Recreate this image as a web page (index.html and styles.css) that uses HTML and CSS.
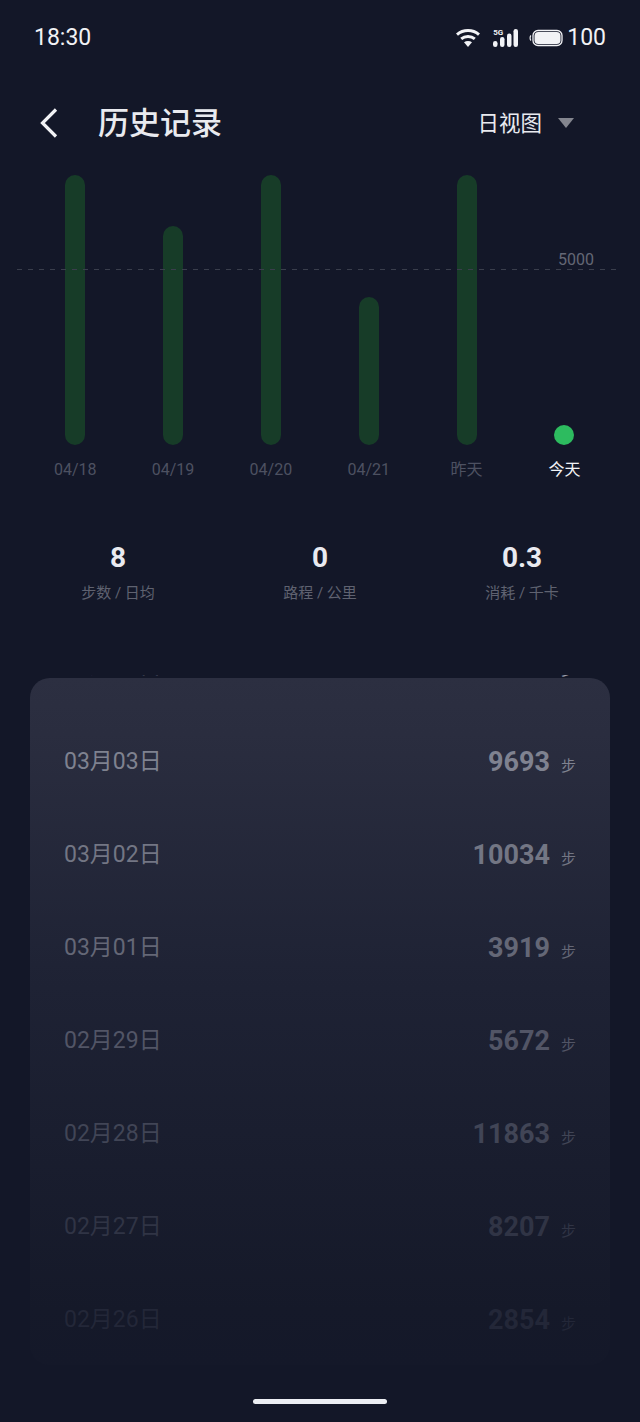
FILE: index.html

```html
<!DOCTYPE html>
<html lang="zh">
<head>
  <meta charset="UTF-8" />
  <meta name="viewport" content="width=device-width, initial-scale=1.0"/>
  <title>历史记录</title>
  <link rel="stylesheet" href="styles.css">
</head>
<body>

<div class="status-bar">
  <span class="time">18:30</span>
  <div class="status-icons">
    <svg class="wifi" width="24" height="18" viewBox="0 0 24 18">
      <path d="M1 5.6C7.2 .2 16.8 .2 23 5.6" fill="none" stroke="#f2f3f6" stroke-width="3"/>
      <path d="M5.2 9.8C9 6.6 15 6.6 18.8 9.8" fill="none" stroke="#f2f3f6" stroke-width="3"/>
      <path d="M8 13.2C10.4 11.6 13.600 11.6 16 13.2L12 18Z" fill="#f2f3f6"/>
    </svg>
    <div class="signal">
      <span class="signal-tag">5G</span>
      <svg width="25" height="18" viewBox="0 0 25 18">
        <rect x="0" y="12" width="4.500" height="6" rx="2.200" fill="#f2f3f6"/>
        <rect x="7" y="8" width="4.500" height="10" rx="2.200" fill="#f2f3f6"/>
        <rect x="14" y="4.500" width="4.500" height="13.500" rx="2.200" fill="#f2f3f6"/>
        <rect x="20.500" y="0" width="4.500" height="18" rx="2.200" fill="#f2f3f6"/>
      </svg>
    </div>
    <svg class="battery" width="34" height="18" viewBox="0 0 34 18">
      <path d="M2 6.500C.8 7.500 .8 10.500 2 11.500" fill="none" stroke="#f2f3f6" stroke-width="1.200"/>
      <rect x="4" y="1.500" width="29" height="15" rx="5" fill="none" stroke="#f2f3f6" stroke-width="1.300"/>
      <rect x="5.500" y="3" width="26" height="12" rx="3.800" fill="#f2f3f6"/>
    </svg>
    <span class="battery-num">100</span>
  </div>
</div>

<div class="top-nav">
  <svg class="back" width="18" height="30" viewBox="0 0 18 30">
    <path d="M16 1.500L2.500 15L16 28.500" fill="none" stroke="#f1f2f5" stroke-width="3.200"/>
  </svg>
  <h1>历史记录</h1>
  <div class="view-select">
    <span>日视图</span>
    <i class="caret"></i>
  </div>
</div>

<div class="chart">
  <div class="goal-line"></div>
  <span class="goal-num">5000</span>
  <div class="plot">
    <div class="bar tall"></div>
    <div class="bar b2"></div>
    <div class="bar tall"></div>
    <div class="bar b4"></div>
    <div class="bar tall"></div>
    <div class="dot"></div>
  </div>
  <div class="days">
    <span>04/18</span>
    <span>04/19</span>
    <span>04/20</span>
    <span>04/21</span>
    <span>昨天</span>
    <span class="today">今天</span>
  </div>
</div>

<div class="stats">
  <div class="stat"><b>8</b><span>步数 / 日均</span></div>
  <div class="stat"><b>0</b><span>路程 / 公里</span></div>
  <div class="stat"><b>0.3</b><span>消耗 / 千卡</span></div>
</div>

<div class="history">
  <div class="row peek"><span class="date">03月04日</span><span class="steps"><b>10086</b><small>步</small></span></div>
  <div class="row r1"><span class="date">03月03日</span><span class="steps"><b>9693</b><small>步</small></span></div>
  <div class="row r2"><span class="date">03月02日</span><span class="steps"><b>10034</b><small>步</small></span></div>
  <div class="row r3"><span class="date">03月01日</span><span class="steps"><b>3919</b><small>步</small></span></div>
  <div class="row r4"><span class="date">02月29日</span><span class="steps"><b>5672</b><small>步</small></span></div>
  <div class="row r5"><span class="date">02月28日</span><span class="steps"><b>11863</b><small>步</small></span></div>
  <div class="row r6"><span class="date">02月27日</span><span class="steps"><b>8207</b><small>步</small></span></div>
  <div class="row r7"><span class="date">02月26日</span><span class="steps"><b>2854</b><small>步</small></span></div>
</div>

<div class="home-bar"></div>

</body>
</html>
```

FILE: styles.css

```css
* {
  box-sizing: border-box;
}

body {
  margin: 0;
  width: 640px;
  height: 1422px;
  overflow: hidden;
  background-color: #131728;
  color: #f1f2f5;
  font-family: Roboto, "Noto Sans CJK SC", sans-serif;
}

.status-bar {
  height: 74px;
  padding: 1px 34px 0;
  display: flex;
  align-items: center;
  justify-content: space-between;
}

.time {
  font-size: 23px;
}

.status-icons {
  display: flex;
  align-items: center;
}

.wifi {
  margin-right: 13px;
}

.signal {
  position: relative;
  margin-right: 11px;
  height: 18px;
}

.signal svg {
  display: block;
}

.signal-tag {
  position: absolute;
  left: 0;
  top: -1px;
  font-size: 8px;
  line-height: 9px;
  font-weight: 700;
}

.battery {
  margin-right: 4px;
}

.battery-num {
  font-size: 23px;
}

.top-nav {
  height: 98px;
  padding: 0 66px 0 40px;
  display: flex;
  align-items: center;
}

.back {
  margin-right: 40px;
}

.top-nav h1 {
  margin: 0 0 5px;
  font-size: 31px;
  font-weight: 500;
  color: #e9eaef;
  flex: 1;
}

.view-select {
  display: flex;
  align-items: center;
  font-size: 21.500px;
  color: #e9eaef;
}

.view-select span {
  padding-bottom: 4px;
}

.caret {
  margin-left: 16px;
  border-left: 8px solid transparent;
  border-right: 8px solid transparent;
  border-top: 10px solid #84868f;
}

.chart {
  position: relative;
  padding: 3px 26.700px 0 26.300px;
}

.goal-line {
  position: absolute;
  left: 17px;
  right: 20px;
  top: 97px;
  height: 1px;
  background: repeating-linear-gradient(90deg, #3a3e4c 0, #3a3e4c 5px, transparent 5px, transparent 11px);
}

.goal-num {
  position: absolute;
  left: 558px;
  top: 79px;
  font-size: 16px;
  line-height: 18px;
  color: #646775;
}

.plot {
  height: 270px;
  display: grid;
  grid-template-columns: repeat(6, 1fr);
  align-items: end;
  justify-items: center;
}

.bar {
  width: 20px;
  border-radius: 10px;
  background-color: #173c28;
}

.tall {
  height: 270px;
}

.b2 {
  height: 219px;
}

.b4 {
  height: 148px;
}

.dot {
  width: 20px;
  height: 20px;
  border-radius: 50%;
  background-color: #2dbb5f;
}

.days {
  margin-top: 15px;
  display: grid;
  grid-template-columns: repeat(6, 1fr);
  justify-items: center;
  font-size: 16px;
  line-height: 20px;
  color: #4d5161;
}

.today {
  color: #f1f2f5;
}

.stats {
  margin-top: 61px;
  padding: 0 17px;
  display: grid;
  grid-template-columns: repeat(3, 1fr);
}

.stat {
  display: flex;
  flex-direction: column;
  align-items: center;
}

.stat b {
  font-size: 28px;
  line-height: 34px;
  font-weight: 700;
  color: #e9eaf0;
}

.stat span {
  margin-top: 9px;
  font-size: 15px;
  line-height: 18px;
  color: #5f6270;
}

.history {
  position: relative;
  margin: 73px 30px 0;
  height: 690px;
  overflow: hidden;
}

.history::before {
  content: "";
  position: absolute;
  left: 0;
  right: 0;
  top: 3px;
  bottom: 0;
  border-radius: 20px;
  background: linear-gradient(#2c2f41, #2a2d3f 8%, #1e2234 45%, #151929 92%, #141829);
}

.row {
  position: relative;
  height: 93px;
  padding: 0 34px;
  display: flex;
  align-items: center;
  justify-content: space-between;
}

.peek {
  margin-top: -59px;
  margin-bottom: 3px;
  color: #9a9ca8;
}

.date {
  font-size: 23px;
}

.steps {
  display: flex;
  align-items: baseline;
  padding-top: 6px;
}

.steps b {
  font-size: 27px;
  font-weight: 700;
}

.steps small {
  margin-left: 11px;
  font-size: 15px;
}

.r1 { color: #7f8290; }
.r2 { color: #737684; }
.r3 { color: #646776; }
.r4 { color: #525566; }
.r5 { color: #414556; }
.r6 { color: #303445; }
.r7 { color: #232738; }

.home-bar {
  width: 134px;
  height: 5px;
  margin: 34px auto 0;
  border-radius: 3px;
  background-color: #eceef3;
}
```
